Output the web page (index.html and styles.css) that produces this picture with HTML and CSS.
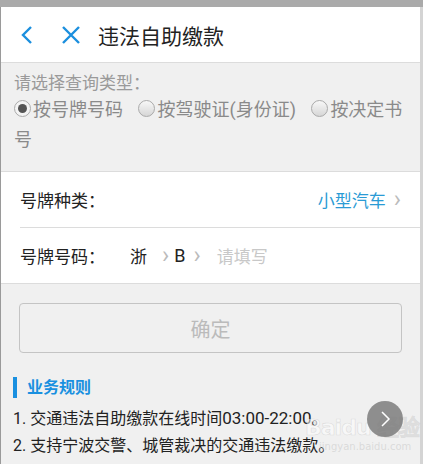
FILE: index.html
```html
<!DOCTYPE html>
<html lang="zh-CN">
<head>
    <meta charset="UTF-8">
    <meta name="viewport" content="width=device-width, initial-scale=1.0">
    <title>违法自助缴款</title>
    <link rel="stylesheet" href="styles.css">
</head>
<body>
    <div class="statusbar"></div>
    <div class="page">
        <header class="header">
            <button class="icon-btn" aria-label="返回">
                <svg width="16" height="20" viewBox="0 0 16 20"><path d="M12 2 L4 10 L12 18" fill="none" stroke="#1b8fde" stroke-width="2.4"/></svg>
            </button>
            <button class="icon-btn" aria-label="关闭">
                <svg width="20" height="20" viewBox="0 0 20 20"><path d="M2 2 L18 18 M18 2 L2 18" fill="none" stroke="#1b8fde" stroke-width="2.4"/></svg>
            </button>
            <h1>违法自助缴款</h1>
        </header>

        <section class="query">
            <div class="query-label">请选择查询类型：</div>
            <div class="radio-group">
                <span class="radio-item"><span class="radio checked"></span>按号牌号码</span>
                <span class="radio-item"><span class="radio"></span>按驾驶证(身份证)</span>
                <span class="radio-item"><span class="radio"></span>按决定书号</span>
            </div>
        </section>

        <section class="form">
            <div class="form-row">
                <span class="form-label">号牌种类：</span>
                <span class="form-value">小型汽车</span>
                <span class="chevron">›</span>
            </div>
            <div class="form-row">
                <span class="form-label">号牌号码：</span>
                <span class="plate">浙</span>
                <span class="chevron">›</span>
                <span class="plate-letter">B</span>
                <span class="chevron">›</span>
                <span class="placeholder">请填写</span>
            </div>
        </section>

        <div class="btn-wrap">
            <button class="submit-btn" disabled>确定</button>
        </div>

        <section class="rules">
            <h2 class="rules-title">业务规则</h2>
            <ol class="rules-list">
                <li>1. 交通违法自助缴款在线时间<span class="num">03:00-22:00</span>。</li>
                <li>2. 支持宁波交警、城管裁决的交通违法缴款。</li>
            </ol>
        </section>

        <div class="watermark">Bai<span class="wm-paw">du</span> 经验<div class="wm-url">jingyan.baidu.com</div></div>
        <div class="next-circle">
            <svg width="12" height="18" viewBox="0 0 12 18"><path d="M3 2 L10 9 L3 16" fill="none" stroke="#fff" stroke-width="1.5"/></svg>
        </div>
    </div>
</body>
</html>
```

FILE: styles.css
```css
body {
    margin: 0;
    padding: 0;
    background-color: #f0f0f0;
    font-family: Roboto, "Noto Sans CJK SC", sans-serif;
    color: #222;
    overflow: hidden;
}

.statusbar {
    height: 7px;
    background-color: #aaaaaa;
}

.page {
    position: relative;
    height: 457px;
    border-left: 1px solid #9a9a9a;
    border-right: 3px solid #d4d4d4;
    box-sizing: border-box;
}

.header {
    height: 56px;
    background-color: #fff;
    border-bottom: 1px solid #dcdcdc;
    display: flex;
    align-items: center;
    padding-left: 18px;
    box-sizing: border-box;
}

.icon-btn {
    background: none;
    border: none;
    padding: 0;
    display: flex;
    margin-right: 26px;
}

.icon-btn:nth-child(2) {
    margin-right: 17px;
}

h1 {
    margin: 0;
    font-size: 21px;
    font-weight: normal;
    color: #222;
}

.query {
    padding: 8px 13px 16px;
}

.query-label {
    font-size: 17px;
    line-height: 24px;
    color: #9a9a9a;
}

.radio-group {
    font-size: 18px;
    line-height: 30px;
    color: #8a8a8a;
}

.radio-item {
    margin-right: 11px;
}

.radio {
    display: inline-block;
    width: 15px;
    height: 15px;
    border-radius: 50%;
    border: 1px solid #aaa;
    background: linear-gradient(#f8f8f8, #d6d6d6);
    vertical-align: -1px;
    margin-right: 2px;
    position: relative;
}

.radio.checked {
    background: #f4f4f4;
}

.radio.checked::after {
    content: "";
    position: absolute;
    left: 3px;
    top: 3px;
    width: 9px;
    height: 9px;
    border-radius: 50%;
    background-color: #555;
}

.form {
    background-color: #fff;
    border-top: 1px solid #dcdcdc;
    border-bottom: 1px solid #dcdcdc;
    padding-left: 19px;
}

.form-row {
    height: 55px;
    display: flex;
    align-items: center;
    font-size: 17px;
    padding-right: 14px;
}

.form-row:first-child {
    border-bottom: 1px solid #dcdcdc;
}

.form-label {
    width: 110px;
}

.form-row:first-child .form-label {
    flex: 1;
}

.form-value {
    color: #2a9bd5;
}

.chevron {
    color: #bbb;
    font-size: 24px;
    margin: 0 5px 0 8px;
    line-height: 1;
    position: relative;
    top: -1px;
}

.plate {
    margin-right: 7px;
}

.plate-letter {
    font-size: 18px;
}

.placeholder {
    color: #c8c8c8;
    margin-left: 11px;
}

.btn-wrap {
    padding: 19px 18px 0 18px;
}

.submit-btn {
    width: 100%;
    height: 50px;
    border: 1px solid #c4c4c4;
    border-radius: 4px;
    background-color: #f0f0f0;
    color: #bbb;
    font-size: 20px;
    font-family: inherit;
}

.rules {
    padding: 24px 12px 0;
}

.rules-title {
    margin: 0;
    border-left: 4px solid #1a90e0;
    padding-left: 10px;
    font-size: 16px;
    line-height: 21px;
    color: #1a90e0;
    font-weight: bold;
}

.rules-list {
    list-style: none;
    margin: 7px 0 0;
    padding: 0;
    font-size: 16px;
    line-height: 27px;
    color: #222;
}

.num {
    font-size: 17px;
}

.watermark {
    position: absolute;
    left: 304px;
    top: 402px;
    font-family: "DejaVu Sans", sans-serif;
    font-size: 22px;
    font-weight: bold;
    color: rgba(255, 255, 255, 0.55);
    -webkit-text-stroke: 0.6px rgba(160, 160, 160, 0.3);
    letter-spacing: -1px;
}

.wm-url {
    font-size: 10px;
    font-weight: normal;
    letter-spacing: 0;
    color: rgba(190, 190, 190, 0.45);
    -webkit-text-stroke: 0;
    margin-left: 14px;
}

.next-circle {
    position: absolute;
    left: 366px;
    top: 394px;
    width: 36px;
    height: 36px;
    border-radius: 50%;
    background-color: rgba(125, 125, 125, 0.85);
    display: flex;
    align-items: center;
    justify-content: center;
}
```
